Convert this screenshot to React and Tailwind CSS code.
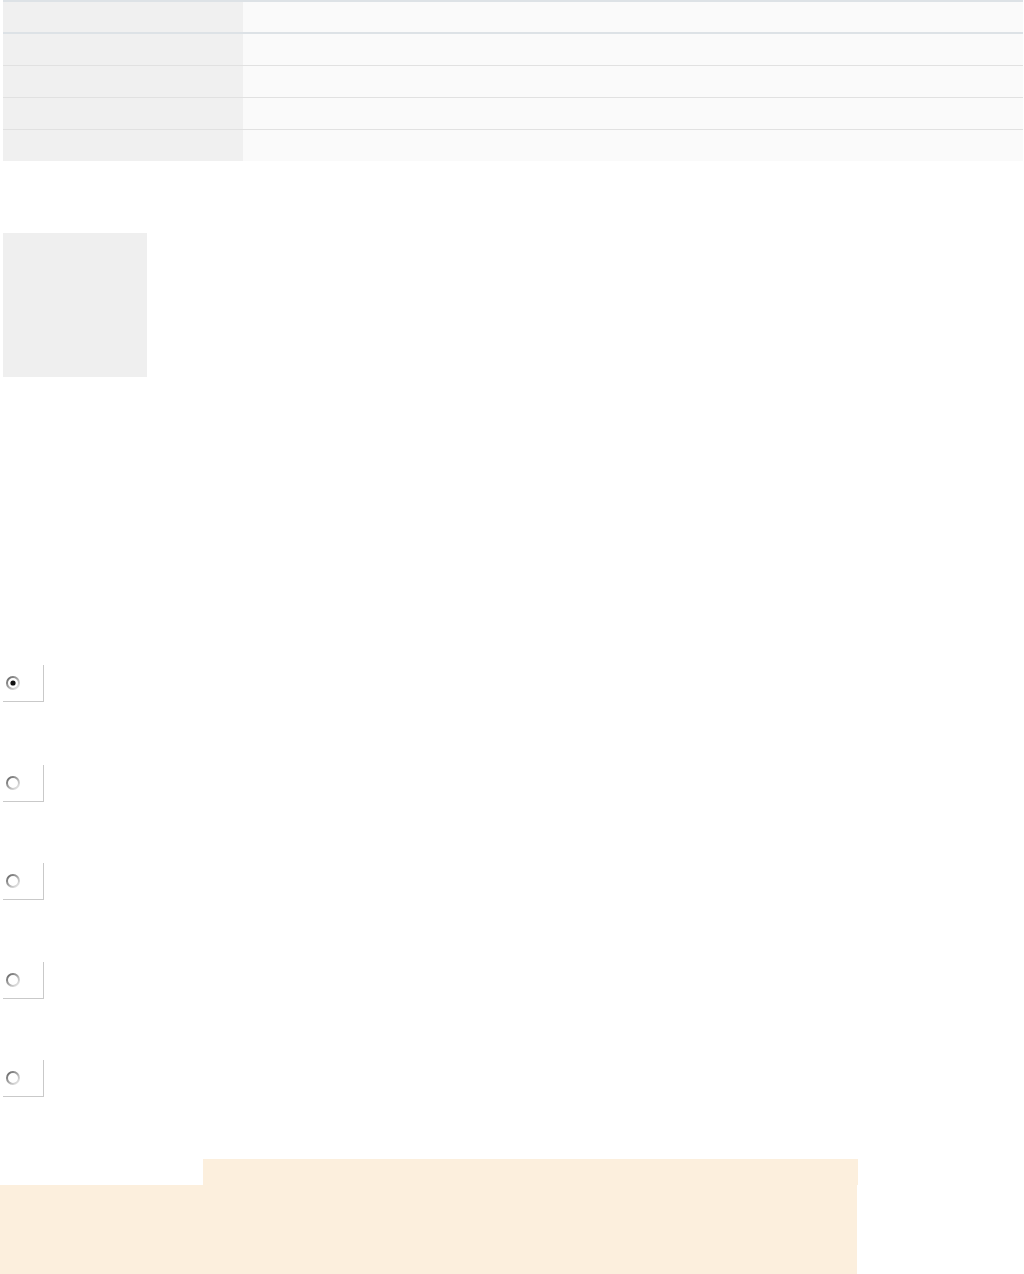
import React from 'react';

const rows = [0, 1, 2, 3, 4];

function Radio({ checked }) {
  const id = checked ? 'rg-on' : 'rg-off';
  return (
    <svg width="16" height="16" viewBox="0 0 16 16" className="block">
      <defs>
        <linearGradient id={id} x1="0" y1="0" x2="1" y2="1">
          <stop offset="0" stopColor="#5f5f5f" />
          <stop offset="0.4" stopColor="#9a9a9a" />
          <stop offset="1" stopColor="#f2f2f2" />
        </linearGradient>
      </defs>
      <circle cx="8" cy="8" r="6" fill="#ffffff" stroke={`url(#${id})`} strokeWidth="2" />
      {checked && <circle cx="8" cy="8" r="2.6" fill="#111111" />}
    </svg>
  );
}

function RadioCell({ checked, className }) {
  return (
    <div className={`ml-[3px] w-[41px] h-[37px] border-r border-b border-[#c9c9c9] flex items-center pl-[2px] ${className}`}>
      <Radio checked={checked} />
    </div>
  );
}

export default function App() {
  return (
    <div className="bg-white w-[1024px] h-[1274px] overflow-hidden" style={{ fontFamily: '"Liberation Sans", Arial, sans-serif' }}>
      {/* table */}
      <div className="ml-[3px] w-[1020px] border-t-2 border-[#dde2e6]">
        {rows.map((r) => (
          <div
            key={r}
            className={`flex ${r === 0 ? 'h-[32px] border-b-2 border-[#dde2e6]' : r < 4 ? 'h-[32px] border-b border-[#e1e1e1]' : 'h-[31px]'}`}
          >
            <div className="w-[240px] bg-[#f0f0f0]" />
            <div className="flex-1 bg-[#fafafa]" />
          </div>
        ))}
      </div>

      {/* gray box */}
      <div className="ml-[3px] mt-[72px] w-[144px] h-[144px] bg-[#efefef]" />

      {/* radios */}
      <RadioCell checked className="mt-[288px]" />
      <RadioCell className="mt-[63px]" />
      <RadioCell className="mt-[61px]" />
      <RadioCell className="mt-[62px]" />
      <RadioCell className="mt-[61px]" />

      {/* orange block */}
      <div className="mt-[62px]">
        <div className="ml-[203px] w-[655px] h-[26px] bg-[#fcefdd]" />
        <div className="w-[857px] h-[100px] bg-[#fcefdd]" />
      </div>
    </div>
  );
}
